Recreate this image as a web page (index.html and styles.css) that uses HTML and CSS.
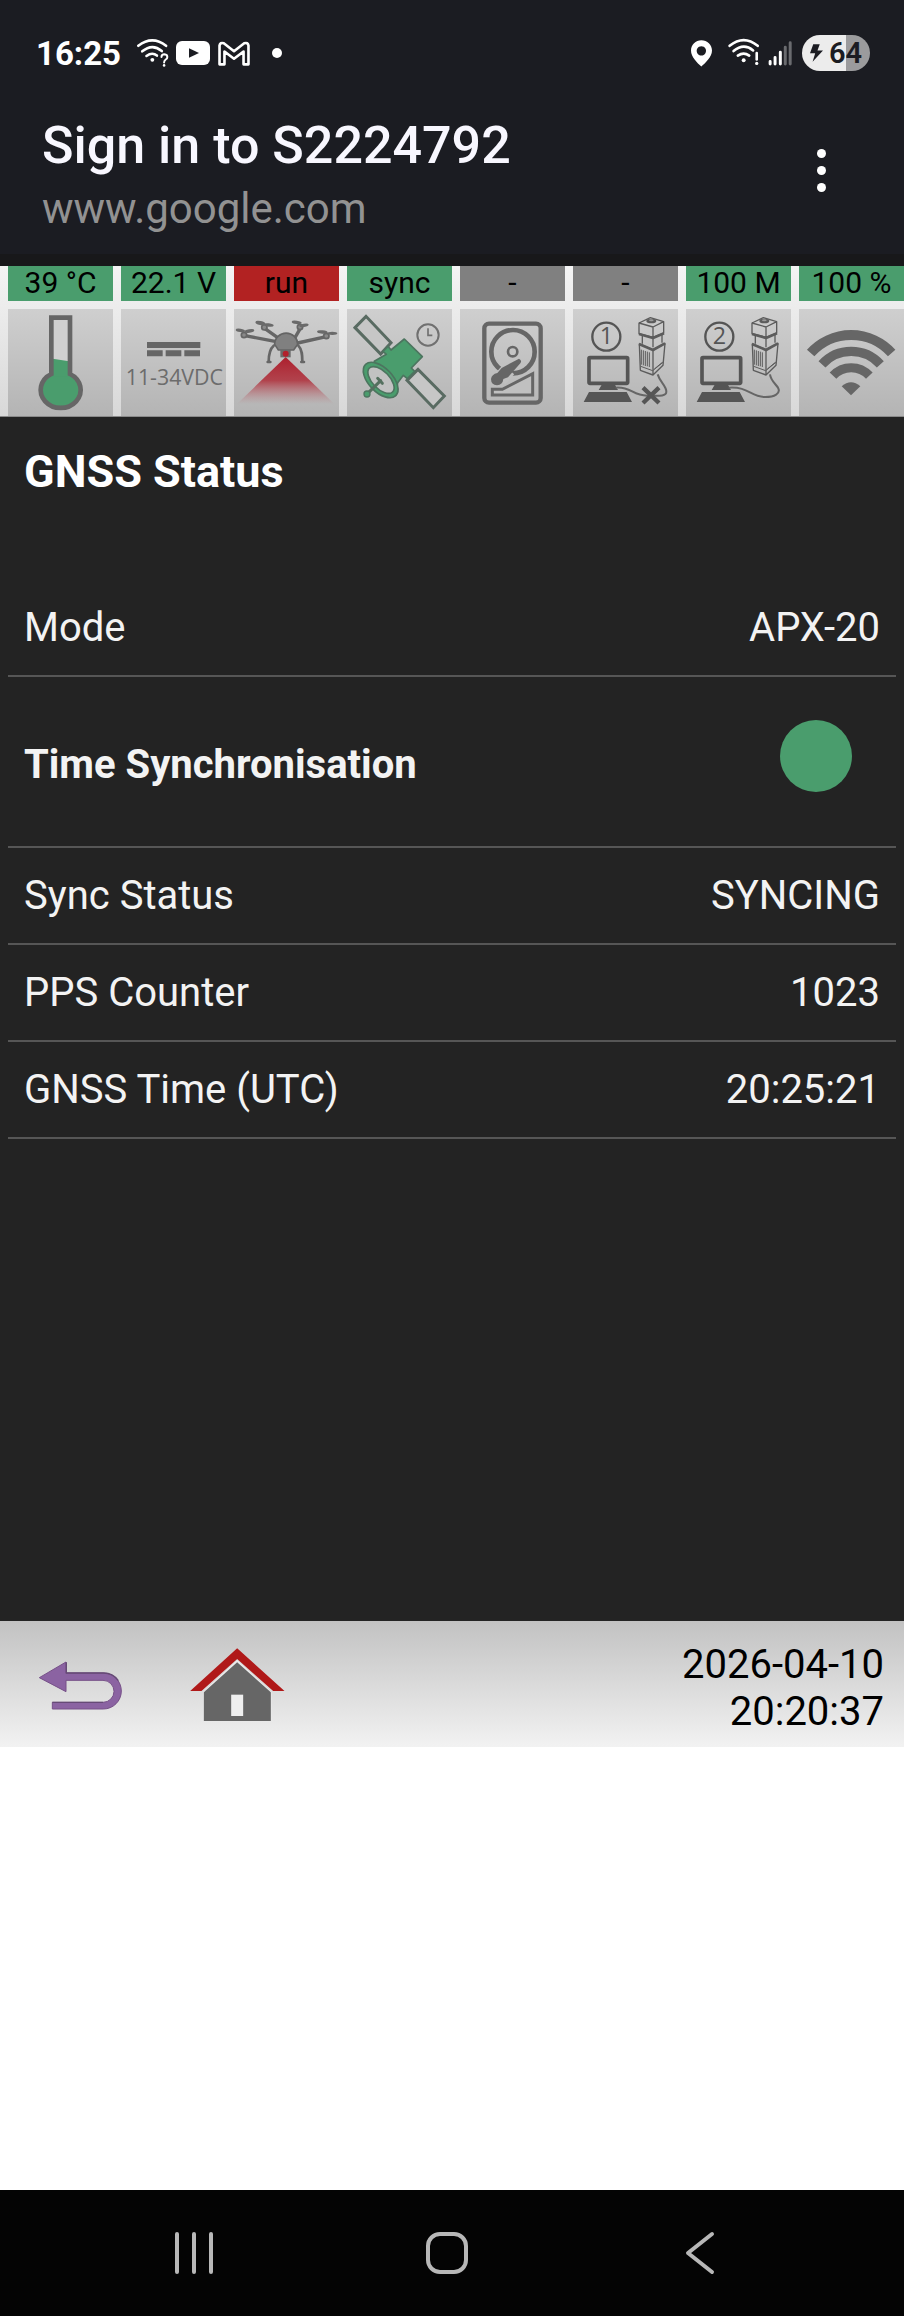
FILE: index.html
```html
<!DOCTYPE html>
<html lang="en">
<head>
<meta charset="UTF-8">
<meta name="viewport" content="width=device-width, initial-scale=1.0">
<title>GNSS Status</title>
<link rel="stylesheet" href="styles.css">
</head>
<body>

<div class="statusbar">
    <span class="clock">16:25</span>
    <svg class="ic-wifi" viewBox="411 116 98 92">
        <g fill="none" stroke="#fff" stroke-width="8" stroke-linecap="round">
            <path d="M415 140Q458 107 500 140"/>
            <path d="M427 157Q458 131 487 156"/>
            <path d="M440 171Q458 158 472 170"/>
            <path d="M486 174q0-8 9-8 9 1 9 8 0 5-5 8-5 4-5 9" stroke-width="6"/>
        </g>
        <circle cx="458" cy="183" r="6" fill="#fff"/>
        <circle cx="494" cy="200" r="4" fill="#fff"/>
    </svg>
    <svg class="ic-youtube" viewBox="528 126 102 72">
        <rect x="528" y="126" width="102" height="72" rx="18" fill="#fff"/>
        <path d="M567 148l30 14-30 14z" fill="#1b1c22"/>
    </svg>
    <svg class="ic-gmail" viewBox="651 122 96 76">
        <path d="M655 193V136q2-11 13-7l31 24 31-24q11-4 13 7v57h-15v-39l-29 22-29-22v39z" fill="none" stroke="#fff" stroke-width="8" stroke-linejoin="round"/>
    </svg>
    <span class="more-dot"></span>

    <div class="right">
        <svg class="ic-pin" viewBox="740 117 63 80">
            <path fill="#fff" fill-rule="evenodd" d="M771 117c18 0 32 14 32 31 0 20-20 37-32 48-12-11-31-28-31-48 0-17 14-31 31-31zm0 18a14 14 0 1 0 .1 0z"/>
        </svg>
        <svg class="ic-wifi" viewBox="851 114 98 92">
            <g fill="none" stroke="#fff" stroke-width="8" stroke-linecap="round">
                <path d="M856 138Q899 103 942 138"/>
                <path d="M868 154Q899 128 928 152"/>
                <path d="M881 168Q899 156 916 168"/>
                <path d="M939 160v20"/>
            </g>
            <circle cx="899" cy="182" r="6" fill="#fff"/>
            <circle cx="939" cy="192" r="5" fill="#fff"/>
        </svg>
        <svg class="ic-signal" viewBox="972 120 72 76">
            <g stroke-width="9" stroke-linecap="round">
                <path d="M978 182v8M993 170v20M1009 154v36" stroke="#fff"/>
                <path d="M1024 139v51M1039 125v65" stroke="#6a6b6f"/>
            </g>
        </svg>
        <span class="battery">
            <svg class="ic-bolt" viewBox="1096 132 40 54"><path d="M1106 132h20l-7 19h17l-32 35 8-26h-16z" fill="#1b1c22"/></svg>
            64
        </span>
    </div>
</div>

<header class="titlebar">
    <div>
        <div class="title">Sign in to S2224792</div>
        <div class="url">www.google.com</div>
    </div>
    <button class="menu" aria-label="More options"><span></span><span></span><span></span></button>
</header>

<!-- shared drawing: computer + scanner head -->
<svg class="defs" aria-hidden="true">
    <symbol id="station" viewBox="368 162 315 321">
        <circle cx="468" cy="245" r="42" fill="none" stroke="#555" stroke-width="7"/>
        <rect x="416" y="308" width="116" height="77" rx="3" fill="none" stroke="#555" stroke-width="11"/>
        <path d="M455 388h38l10 17h-58zM416 411h113l16 30H400z" fill="#555"/>
        <g fill="none" stroke="#5c5c5c" stroke-width="4" stroke-linejoin="round">
            <path d="M566 204l34-16 40 12v34l-32 13-42-11zM566 204l42 12 32-16M608 216v31"/>
            <path d="M576 240v26M635 238v25M608 247v30"/>
            <path d="M567 267l41 17 36-19-6 66-30 29-38-14zM608 284v76"/>
            <path d="M573 284v45M579 286v45M585 288v45M591 290v44M597 292v44" stroke-width="3"/>
            <path d="M571 334l36 13 31-25M612 342l24-20" stroke-width="3"/>
            <path d="M566 237l42 12 33-14M566 267l42 18 36-20" stroke-width="8"/>
        </g>
        <ellipse cx="603" cy="198" rx="15" ry="7" fill="#5c5c5c"/>
        <ellipse cx="603" cy="196" rx="7" ry="3" fill="#999"/>
    </symbol>
</svg>

<nav class="tiles">
    <a href="#temperature" class="tile">
        <span class="label green">39 °C</span>
        <svg class="pic" viewBox="24 162 315 321">
            <path d="M154 188h56v168h-56z" fill="#d0d0d0"/>
            <ellipse cx="181" cy="405" rx="58" ry="52" fill="#4a9d6d"/>
            <path d="M158 311l49 8v46h-49z" fill="#4a9d6d"/>
            <path d="M154 357V188h56v169a60 54 0 1 1-56 0z" fill="none" stroke="#666" stroke-width="14"/>
        </svg>
    </a>
    <a href="#voltage" class="tile">
        <span class="label green">22.1 V</span>
        <svg class="pic" viewBox="361 162 315 321">
            <path d="M439 261h160v18H439zM439 286h47v18h-47zM495 286h47v18h-47zM551 286h47v18h-47z" fill="#666"/>
            <text x="521" y="390" text-anchor="middle" class="volt-text">11-34VDC</text>
        </svg>
    </a>
    <a href="#scanner" class="tile">
        <span class="label red">run</span>
        <svg class="pic" viewBox="27 162 315 321">
            <defs>
                <linearGradient id="beam" x1="0" y1="0" x2="0" y2="1">
                    <stop offset="0" stop-color="#ad1f2d"/>
                    <stop offset=".5" stop-color="#b03540" stop-opacity=".9"/>
                    <stop offset="1" stop-color="#b87078" stop-opacity="0"/>
                </linearGradient>
            </defs>
            <path d="M182 306L36 447h292z" fill="url(#beam)"/>
            <g fill="none" stroke="#666" stroke-linecap="round">
                <path d="M150 259L60 242M158 248l-38-27M210 248l16-28M218 264l86-19" stroke-width="10"/>
                <path d="M146 272c-14 12-15 30-15 48M220 272c12 12 12 30 12 48" stroke-width="8"/>
                <path d="M128 321h8M229 321h8" stroke-width="8"/>
            </g>
            <g fill="#8a8a8a" stroke="#666" stroke-width="5">
                <circle cx="57" cy="240" r="8"/>
                <circle cx="118" cy="217" r="8"/>
                <circle cx="225" cy="216" r="8"/>
                <circle cx="304" cy="243" r="8"/>
            </g>
            <g fill="#6a6a6a">
                <ellipse cx="46" cy="226" rx="14" ry="5" transform="rotate(8 46 226)"/>
                <ellipse cx="73" cy="228" rx="15" ry="5" transform="rotate(-10 73 228)"/>
                <ellipse cx="106" cy="204" rx="15" ry="6" transform="rotate(12 106 204)"/>
                <ellipse cx="131" cy="210" rx="15" ry="5" transform="rotate(8 131 210)"/>
                <ellipse cx="215" cy="202" rx="15" ry="5" transform="rotate(8 215 202)"/>
                <ellipse cx="237" cy="211" rx="14" ry="5" transform="rotate(-10 237 211)"/>
                <ellipse cx="292" cy="231" rx="16" ry="5" transform="rotate(6 292 231)"/>
                <ellipse cx="322" cy="235" rx="15" ry="5"/>
            </g>
            <path d="M149 268a34 33 0 0 1 69 0l-12 17h-46z" fill="#808080" stroke="#646464" stroke-width="5"/>
            <path d="M166 285h31v22h-31z" fill="#6a6a6a"/>
            <circle cx="182" cy="296" r="9" fill="#b3202c"/>
        </svg>
    </a>
    <a href="#gnss" class="tile">
        <span class="label green">sync</span>
        <svg class="pic" viewBox="365 162 315 321">
            <g fill="#c6c6c6" stroke="#596b62" stroke-width="9">
                <path d="M389 218l33-34 75 79-31 34z"/>
                <path d="M545 376l33-33 79 80-33 35z"/>
            </g>
            <path d="M473 289l15-15 9 11 40-33 54 53-33 34 10 10-22 22-12-10-17 22-6 38-62-54-2-48 36-21z" fill="#4a9d6d" stroke="#4c755f" stroke-width="5" stroke-linejoin="round"/>
            <ellipse cx="466" cy="375" rx="65" ry="36" transform="rotate(46 466 375)" fill="#4a9d6d" stroke="#4c755f" stroke-width="5"/>
            <ellipse cx="467" cy="375" rx="50" ry="26" transform="rotate(46 467 375)" fill="#c2c2c2" stroke="#4c755f" stroke-width="5"/>
            <path d="M427 415l39-38M457 370l14 15" stroke="#55705f" stroke-width="9" stroke-linecap="round"/>
            <circle cx="425" cy="417" r="9" fill="#4a9d6d" stroke="#4c755f" stroke-width="4"/>
            <circle cx="608" cy="240" r="32" fill="none" stroke="#707070" stroke-width="6"/>
            <path d="M608 220v21h13" fill="none" stroke="#707070" stroke-width="5"/>
        </svg>
    </a>
    <a href="#storage" class="tile">
        <span class="label gray">-</span>
        <svg class="pic" viewBox="30 162 315 321">
            <rect x="103" y="206" width="169" height="237" rx="14" fill="none" stroke="#666" stroke-width="13"/>
            <circle cx="189" cy="290" r="65" fill="none" stroke="#666" stroke-width="14"/>
            <circle cx="188" cy="290" r="14" fill="none" stroke="#666" stroke-width="8"/>
            <path d="M176 343L149 374" stroke="#c0c0c0" stroke-width="44"/>
            <path d="M207 311q10 5 4 14l-37 42-14 5q-2 18-19 19-18-2-18-19 2-14 19-18l13-15z" fill="#666"/>
            <path d="M127 403h30l91-47v64H127z" fill="#c0c0c0" stroke="#666" stroke-width="9"/>
        </svg>
    </a>
    <a href="#station1" class="tile">
        <span class="label gray">-</span>
        <svg class="pic" viewBox="0 0 315 321">
            <use href="#station" width="315" height="321"/>
            <text x="100" y="106" text-anchor="middle" class="num-text">1</text>
            <path d="M128 236c46-4 50 24 94 24 30 0 58 4 58-12 0-18-18-26-26-52" fill="none" stroke="#666" stroke-width="6"/>
            <path d="M210 236l48 46M258 236l-48 46" stroke="#555" stroke-width="13"/>
        </svg>
    </a>
    <a href="#station2" class="tile">
        <span class="label green">100 M</span>
        <svg class="pic" viewBox="0 0 315 321">
            <use href="#station" width="315" height="321"/>
            <text x="100" y="106" text-anchor="middle" class="num-text">2</text>
            <path d="M128 236c60-4 66 28 110 28 26 0 48-10 38-28-8-12-22-22-24-40" fill="none" stroke="#666" stroke-width="6"/>
        </svg>
    </a>
    <a href="#wifi" class="tile">
        <span class="label green">100 %</span>
        <svg class="pic" viewBox="375 162 315 321">
            <g fill="none" stroke="#666">
                <path d="M410 294a164 164 0 0 1 243 0" stroke-width="30"/>
                <path d="M444 328a118 118 0 0 1 175 0" stroke-width="28"/>
                <path d="M477 362a74 74 0 0 1 109 0" stroke-width="27"/>
            </g>
            <path d="M503 394q28-25 56 0l-28 27z" fill="#666"/>
        </svg>
    </a>
</nav>

<main>
    <h1>GNSS Status</h1>
    <table>
        <tr>
            <th scope="row">Mode</th>
            <td>APX-20</td>
        </tr>
        <tr class="section">
            <th scope="row">Time Synchronisation</th>
            <td><span class="led" role="img" aria-label="OK"></span></td>
        </tr>
        <tr>
            <th scope="row">Sync Status</th>
            <td>SYNCING</td>
        </tr>
        <tr>
            <th scope="row">PPS Counter</th>
            <td>1023</td>
        </tr>
        <tr>
            <th scope="row">GNSS Time (UTC)</th>
            <td>20:25:21</td>
        </tr>
    </table>
</main>

<footer>
    <a href="#back" aria-label="Back">
        <svg class="ic-back" viewBox="118 185 249 147">
            <path d="M119 235l80-47v33h112a54 54 0 0 1 0 108H158v-20h152a33 33 0 0 0 0-66H199v34z" fill="#8b63a2" stroke="#765088" stroke-width="3"/>
            <path d="M200 189v32h112a54 54 0 0 1 44 23M158 309h152" fill="none" stroke="#664a76" stroke-width="4"/>
        </svg>
    </a>
    <a href="#home" aria-label="Home">
        <svg class="ic-house" viewBox="571 144 284 222">
            <path d="M712 179l103 97v88H610v-88z" fill="#ececec"/>
            <path d="M571 273l141-128 142 128h-34l-108-96-107 96z" fill="#b01919"/>
            <path d="M612 277l100-90 101 90v86H612z" fill="#666"/>
            <path d="M694 284h36v64h-36z" fill="#efefef"/>
        </svg>
    </a>
    <div class="datetime">2026-04-10<br>20:20:37</div>
</footer>

<div class="blank"></div>

<div class="navbar">
    <button aria-label="Recent apps">
        <svg viewBox="0 0 44 44"><path d="M5 3v38M22 3v38M39 3v38"/></svg>
    </button>
    <button aria-label="Home">
        <svg viewBox="0 0 44 44"><rect x="3" y="3" width="38" height="38" rx="12"/></svg>
    </button>
    <button aria-label="Back">
        <svg viewBox="0 0 44 44"><path d="M34 3L10 22l24 19"/></svg>
    </button>
</div>

</body>
</html>
```
FILE: styles.css
```css
* { box-sizing: border-box; }
body { margin: 0; min-height: 100vh; display: flex; flex-direction: column; font-family: Roboto, "Liberation Sans", sans-serif; font-size: 40px; background: #fff; }
button { border: 0; padding: 0; background: none; }
a { color: inherit; text-decoration: none; }
svg { display: block; }
.defs { display: none; }

/* phone status bar */
.statusbar { display: flex; align-items: center; height: 106px; padding: 0 34px 0 36px; background: #1b1c22; color: #fff; }
.clock { font-size: 33px; font-weight: 700; margin-right: 16px; }
.ic-wifi { width: 32px; height: 30px; }
.ic-youtube { width: 34px; height: 24px; margin: 0 8px 0 7px; }
.ic-gmail { width: 32px; height: 25px; }
.more-dot { width: 10px; height: 10px; border-radius: 50%; background: #fff; margin-left: 22px; }
.right { display: flex; align-items: center; margin-left: auto; }
.ic-pin { width: 21px; height: 27px; margin-right: 16px; }
.ic-signal { width: 24px; height: 25px; margin: 0 10px 0 8px; }
.battery { display: flex; align-items: center; justify-content: center; gap: 6px; width: 68px; height: 36px; border-radius: 18px; background: linear-gradient(to right, #ececec 64%, #9b9b9d 64%); color: #1b1c22; font-size: 29px; font-weight: 600; }
.ic-bolt { width: 13px; height: 18px; }

/* browser title */
.titlebar { display: flex; justify-content: space-between; padding: 8px 72px 14px 42px; background: #1b1c22; border-bottom: 12px solid #18181a; line-height: 63px; }
.title { font-size: 52px; font-weight: 500; color: #f8f7ff; }
.url { font-size: 42px; color: #929292; }
.menu { display: flex; flex-direction: column; align-items: center; justify-content: center; gap: 8px; width: 22px; padding-bottom: 14px; }
.menu span { width: 9px; height: 9px; border-radius: 50%; background: #fff; }

/* indicator tiles */
.tiles { display: grid; grid-template-columns: repeat(8, 1fr); gap: 8px; padding-left: 8px; background: linear-gradient(#f4f4f4, #d8d8d8); border-bottom: 1px solid #8a8a8a; }
.label { display: block; height: 35px; line-height: 34px; margin-bottom: 8px; font-size: 30px; text-align: center; color: #000; }
.green { background: #4a9d6d; }
.red { background: #b22222; }
.gray { background: #808080; }
.pic { width: 100%; height: auto; background: linear-gradient(#cfcfcf, #b4b4b4); }
.volt-text { font-family: "Open Sans", sans-serif; font-size: 64px; fill: #6c6c6c; }
.num-text { font-family: "Open Sans", sans-serif; font-size: 70px; fill: #555; }

/* status page */
main { min-height: 52vh; padding: 29px 8px; background: #232323; color: #f3f3f3; }
h1 { margin: 0 16px 82px; font-size: 45px; line-height: 52px; color: #fff; }
table { width: 100%; border-collapse: separate; border-spacing: 0; }
th, td { padding: 20px 16px; line-height: 55px; border-bottom: 2px solid #565656; }
th { text-align: left; font-weight: normal; }
td { text-align: right; }
.section th { padding-top: 60px; padding-bottom: 54px; font-weight: bold; }
.section td { padding: 43px 44px 54px; vertical-align: top; }
.led { display: block; width: 72px; height: 72px; margin-left: auto; border-radius: 50%; background: #4a9d6d; }

footer { display: flex; align-items: center; gap: 68px; height: 126px; padding: 2px 20px 0 39px; background: linear-gradient(#c2c2c2, #f2f2f2); }
.ic-back { width: 83px; height: 49px; }
.ic-house { width: 95px; height: 74px; }
.datetime { margin-left: auto; padding-top: 5px; line-height: 47px; text-align: right; color: #000; }

.blank { flex: 1; }

/* phone navigation */
.navbar { display: grid; grid-template-columns: repeat(3, 1fr); justify-items: center; align-items: center; height: 126px; padding: 0 77px 0 67px; background: #040404; }
.navbar svg { width: 44px; height: 44px; fill: none; stroke: #b8b8b8; stroke-width: 4; stroke-linecap: round; stroke-linejoin: round; }
```
